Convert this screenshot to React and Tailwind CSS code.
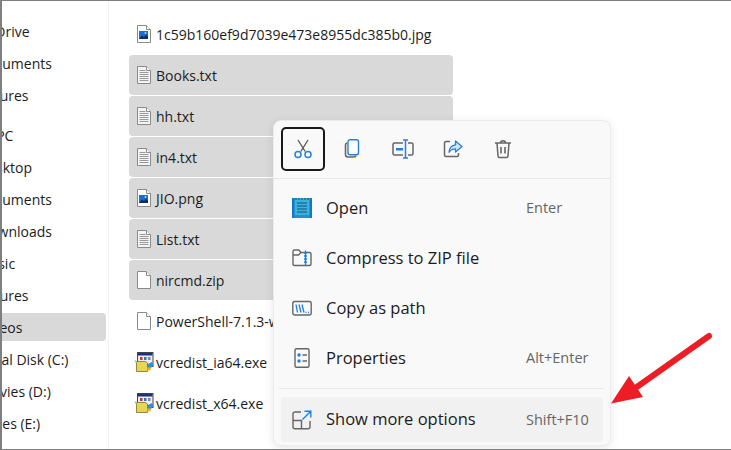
import React from 'react';

const FONT = "font-['Open_Sans','Noto_Sans',sans-serif]";

const navItems = [
  { label: 'OneDrive', offset: 'ml-[-34px]' },
  { label: 'Documents', offset: 'ml-[-25px]' },
  { label: 'Pictures', offset: 'ml-[-26px]' },
  { label: 'This PC', offset: 'ml-[-36px]', gap: true },
  { label: 'Desktop', offset: 'ml-[-24px]' },
  { label: 'Documents', offset: 'ml-[-25px]' },
  { label: 'Downloads', offset: 'ml-[-23px]' },
  { label: 'Music', offset: 'ml-[-25px]' },
  { label: 'Pictures', offset: 'ml-[-26px]' },
  { label: 'Videos', offset: 'ml-[-23px]', active: true },
  { label: 'Local Disk (C:)', offset: 'ml-[-23px]' },
  { label: 'Movies (D:)', offset: 'ml-[-23px]' },
  { label: 'Files (E:)', offset: 'ml-[-14px]' },
];

const files = [
  { name: '1c59b160ef9d7039e473e8955dc385b0.jpg', icon: 'image' },
  { name: 'Books.txt', icon: 'text', selected: true },
  { name: 'hh.txt', icon: 'text', selected: true },
  { name: 'in4.txt', icon: 'text', selected: true },
  { name: 'JIO.png', icon: 'image', selected: true },
  { name: 'List.txt', icon: 'text', selected: true },
  { name: 'nircmd.zip', icon: 'blank', selected: true },
  { name: 'PowerShell-7.1.3-win-x64.msi', icon: 'blank' },
  { name: 'vcredist_ia64.exe', icon: 'exe' },
  { name: 'vcredist_x64.exe', icon: 'exe' },
];

const FileIcon = ({ type }) => {
  if (type === 'exe') {
    return (
      <svg width="20" height="20" viewBox="0 0 20 20" className="shrink-0">
        <rect x="3.5" y="0.5" width="15.500" height="14" fill="#eeeef4" stroke="#444" />
        <rect x="4" y="1" width="14.500" height="2.500" fill="#1c2f80" />
        <rect x="6" y="5" width="2.500" height="3" fill="#c0392b" />
        <rect x="10" y="5" width="2.500" height="3" fill="#3a6fb0" />
        <rect x="14" y="5" width="2.500" height="3" fill="#7a8a9a" />
        <path d="M2.500 9.500h9l2 1.500v8.500h-11z" fill="#e6d652" stroke="#77702a" strokeWidth="0.800" />
        <path d="M0.500 8l3 1.500-1.500 2z" fill="#9cbf5a" />
        <path d="M13 12.500l5-2.500 1.500 3-3 3.500-3-1z" fill="#2f8fdc" />
        <path d="M13.500 15.500h4l-1.500 3h-2.500z" fill="#f0b429" />
      </svg>
    );
  }
  return (
    <svg width="16" height="20" viewBox="0 0 16 20" className="shrink-0">
      <path d="M1.5 1.5h9l4 4v13h-13z" fill={type === 'text' ? '#f4f4f4' : '#fff'} stroke="#8a8a8a" />
      <path d="M10.5 1.5v4h4" fill="#fff" stroke="#8a8a8a" />
      {type === 'text' && (
        <path d="M3.5 5.5h6M3.5 7.5h9M3.5 9.5h9M3.5 11.5h9M3.5 13.5h9M3.5 15.5h9" stroke="#9a9a9a" />
      )}
      {type === 'image' && (
        <g>
          <rect x="3" y="7" width="9" height="8" fill="#1c6fd0" />
          <path d="M3 15l3-3.5 2 1.5 2-2.5 2 2v2.500z" fill="#0f2f66" />
          <circle cx="9.500" cy="9" r="0.900" fill="#bfe3ff" />
        </g>
      )}
    </svg>
  );
};

const CutIcon = () => (
  <svg width="20" height="20" viewBox="0 0 20 20" fill="none">
    <path d="M5 1l7.200 11.500M15 1L7.800 12.500" stroke="#555" strokeWidth="1.300" />
    <circle cx="5" cy="15.500" r="3" stroke="#2a7fd6" strokeWidth="1.500" />
    <circle cx="15" cy="15.500" r="3" stroke="#2a7fd6" strokeWidth="1.500" />
  </svg>
);

const CopyIcon = () => (
  <svg width="20" height="20" viewBox="0 0 20 20" fill="none">
    <path d="M4 4c-1 .3-1.500 1-1.500 2v9.500c0 1.700 1 2.500 2.500 2.500h6c1 0 1.800-.5 2-1.500" stroke="#666" strokeWidth="1.600" />
    <rect x="5" y="0.800" width="10.500" height="15" rx="2" fill="#fff" stroke="#2a7fd6" strokeWidth="1.400" />
  </svg>
);

const RenameIcon = () => (
  <svg width="22" height="20" viewBox="0 0 22 20" fill="none">
    <path d="M11 4H2.500C1.500 4 1 4.600 1 5.500v9c0 .9.500 1.500 1.500 1.500H11M16 4h3.500c.9 0 1.500.6 1.500 1.500v9c0 .9-.6 1.500-1.500 1.500H16" stroke="#666" strokeWidth="1.500" />
    <rect x="4" y="9" width="7" height="2.500" fill="#1f7fe0" />
    <path d="M11 1h5M11 19h5M13.500 1v18" stroke="#2a7fd6" strokeWidth="1.500" />
  </svg>
);

const ShareIcon = () => (
  <svg width="20" height="20" viewBox="0 0 20 20" fill="none">
    <path d="M7 2.500H3c-1 0-1.500.6-1.500 1.500v12c0 1 .5 1.500 1.500 1.500h11c1 0 1.500-.5 1.500-1.500v-2" stroke="#666" strokeWidth="1.500" />
    <path d="M12.500 2l6.500 5.500-6.500 5.500V9.800c-3 0-5 1-6.500 3.500.3-4 2.500-7 6.500-7.500z" fill="#cfe6fb" stroke="#2a7fd6" strokeWidth="1.300" strokeLinejoin="round" />
  </svg>
);

const TrashIcon = () => (
  <svg width="18" height="20" viewBox="0 0 18 20" fill="none" stroke="#666" strokeWidth="1.500">
    <path d="M1 4h16M6.500 4c0-3 5-3 5 0M3 4l1 13c.1 1 .7 1.500 1.500 1.500h7c.8 0 1.400-.5 1.500-1.500l1-13" />
    <path d="M7 8v6.500M11 8v6.500" strokeWidth="1.600" />
  </svg>
);

const NotepadIcon = () => (
  <svg width="20" height="20" viewBox="0 0 20 20">
    <rect width="20" height="20" fill="#1277c9" />
    <rect x="2.500" y="0" width="15" height="20" fill="#39b3dc" />
    <rect x="2.500" y="17" width="15" height="3" fill="#2a8fc0" />
    <path d="M5 5h10M5 8h10M5 11h10M5 14h10" stroke="#14507c" strokeWidth="1" />
    <path d="M4 0v2M7 0v2M10 0v2M13 0v2M16 0v2" stroke="#0c3f6c" strokeWidth="1" />
  </svg>
);

const ZipIcon = () => (
  <svg width="20" height="20" viewBox="0 0 20 20" fill="none">
    <path d="M1 6V3.500C1 2.600 1.500 2 2.500 2h4.300l2.200 2.500h8.500c.9 0 1.500.6 1.500 1.500v10c0 1-.6 1.500-1.500 1.500h-15C1.500 17.500 1 17 1 16z" stroke="#666" strokeWidth="1.400" />
    <path d="M1 7h5.500L9 4.500" stroke="#666" strokeWidth="1.400" />
    <path d="M13.500 2.500v15M12 5h3M12 8h3M12 11h3M12 14h3" stroke="#1f7fe0" strokeWidth="1.300" />
  </svg>
);

const PathIcon = () => (
  <svg width="20" height="20" viewBox="0 0 20 20" fill="none">
    <rect x="0.800" y="3.500" width="18.400" height="13.500" rx="2" stroke="#666" strokeWidth="1.400" />
    <path d="M4 6.500l1.500 8M7 6.500l2 8M10 6.500l2 8" stroke="#1f7fe0" strokeWidth="1.300" />
    <path d="M13.500 14.500h1M16 14.500h1" stroke="#1f7fe0" strokeWidth="1.500" />
  </svg>
);

const PropertiesIcon = () => (
  <svg width="20" height="20" viewBox="0 0 20 20" fill="none">
    <rect x="3" y="0.800" width="14" height="18.400" rx="1.500" stroke="#666" strokeWidth="1.400" />
    <circle cx="7" cy="7" r="1.700" fill="#1f7fe0" />
    <circle cx="7" cy="13" r="1.700" fill="#1f7fe0" />
    <path d="M10.500 7H15M10.500 13H15" stroke="#666" strokeWidth="1.300" />
  </svg>
);

const MoreIcon = () => (
  <svg width="20" height="20" viewBox="0 0 20 20" fill="none">
    <path d="M9 2H3C1.800 2 1 2.800 1 4v13c0 1 .8 1.700 2 1.700h13c1.200 0 2-.7 2-1.700v-6" stroke="#666" strokeWidth="1.400" />
    <path d="M1 10.500h8.500v8" stroke="#666" strokeWidth="1.400" />
    <path d="M10.500 9.500L18.500 1.500M12.500 1.200h6.300v6.300" stroke="#1f7fe0" strokeWidth="1.400" />
  </svg>
);

const menuItems = [
  { label: 'Open', shortcut: 'Enter', Icon: NotepadIcon },
  { label: 'Compress to ZIP file', Icon: ZipIcon },
  { label: 'Copy as path', Icon: PathIcon },
  { label: 'Properties', shortcut: 'Alt+Enter', Icon: PropertiesIcon },
];

const App = () => {
  return (
    <div className={`${FONT} relative flex w-[731px] h-[450px] overflow-hidden bg-white text-[14px] text-[#1c1c1c] border-l-2 border-y border-[#7f7f7f]`}>
      {/* nav pane, cut off at the left edge of the screenshot */}
      <div className="w-[107px] h-full shrink-0 overflow-hidden border-r border-[#f2f2f2] pt-[14px]">
        {navItems.map((item, i) => (
          <div key={i} className={`h-8 flex items-center ${item.gap ? 'mt-2' : ''}`}>
            <div className={`w-[104px] h-7 flex items-center rounded-r ${item.active ? 'bg-[#d9d9d9]' : ''}`}>
              <span className={`${item.offset} whitespace-nowrap`}>{item.label}</span>
            </div>
          </div>
        ))}
      </div>

      {/* file list */}
      <div className="flex-1 pl-[20px] pt-[13px] flex flex-col gap-px">
        {files.map((file) => (
          <div
            key={file.name}
            className={`w-[324px] h-10 flex items-center gap-1 pl-[7px] rounded-sm whitespace-nowrap ${file.selected ? 'bg-[#d9d9d9]' : ''}`}
          >
            <div className="w-4 flex justify-center">
              <FileIcon type={file.icon} />
            </div>
            <span>{file.name}</span>
          </div>
        ))}
      </div>

      {/* context menu */}
      <div className="absolute left-[271px] top-[119px] w-[338px] h-[326px] rounded-lg bg-[#f9f9f9] border border-[#ececec] shadow-[0_2px_10px_rgba(0,0,0,0.10)] px-[7px] pt-[6px]">
        <div className="flex items-center h-11">
          <div className="w-11 h-11 flex items-center justify-center rounded-[5px] border-2 border-[#1a1a1a]"><CutIcon /></div>
          <div className="w-[50px] ml-[3px] flex justify-center"><CopyIcon /></div>
          <div className="w-[50px] flex justify-center"><RenameIcon /></div>
          <div className="w-[50px] flex justify-center"><ShareIcon /></div>
          <div className="w-[50px] flex justify-center"><TrashIcon /></div>
        </div>
        <div className="h-px bg-[#e6e6e6] mt-[7px] -mx-[7px]" />
        <div className="pt-[4px]">
          {menuItems.map(({ label, shortcut, Icon }) => (
            <div key={label} className="h-[50px] flex items-center pl-[11px] pr-[13px] text-[16.5px]">
              <Icon />
              <span className="ml-[14px] flex-1 whitespace-nowrap">{label}</span>
              {shortcut && <span className="w-[64px] whitespace-nowrap text-[14.5px] text-[#666]">{shortcut}</span>}
            </div>
          ))}
        </div>
        <div className="h-px bg-[#e6e6e6] mt-[5px] mr-[-1px] ml-[-2px]" />
        <div className="h-[45px] mt-2 flex items-center rounded bg-[#f1f1f1] pl-[11px] pr-[13px] text-[16.5px]">
          <MoreIcon />
          <span className="ml-[14px] flex-1 whitespace-nowrap">Show more options</span>
          <span className="w-[64px] whitespace-nowrap text-[14.5px] text-[#666]">Shift+F10</span>
        </div>
      </div>

      {/* annotation arrow */}
      <svg className="absolute left-[-2px] top-[-1px] pointer-events-none" width="731" height="450" viewBox="0 0 731 450">
        <path d="M709 336L634 389" stroke="#ee1c25" strokeWidth="6" strokeLinecap="round" />
        <path d="M611 403.500L629 376L643 397z" fill="#ee1c25" />
      </svg>
    </div>
  );
};

export default App;
